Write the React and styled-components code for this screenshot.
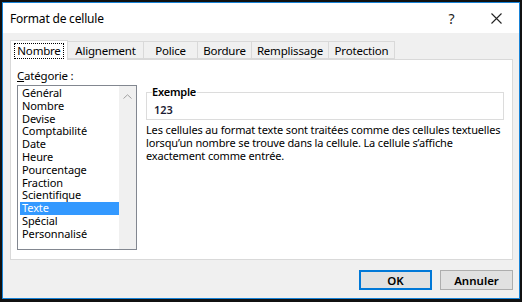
import React from "react";
import styled, { createGlobalStyle } from "styled-components";

const GlobalStyle = createGlobalStyle`
  html, body {
    margin: 0;
    padding: 0;
    background: #111;
  }
  body {
    font-family: "Noto Sans", "Open Sans", sans-serif;
    color: #000;
  }
`;

const Frame = styled.div`
  width: 522px;
  height: 302px;
  box-sizing: border-box;
  border: 2px solid #111;
  border-bottom-width: 3px;
`;

const Window = styled.div`
  height: 100%;
  box-sizing: border-box;
  border: 1px solid #1883d7;
  display: flex;
  flex-direction: column;
  background: #f0f0f0;
`;

const TitleBar = styled.div`
  height: 30px;
  background: #fff;
  display: flex;
  align-items: center;
  padding-left: 7px;
  font-size: 12px;
`;

const Title = styled.div`
  flex: 1;
  letter-spacing: -0.2px;
`;

const TitleButton = styled.div`
  width: 45px;
  height: 30px;
  display: flex;
  align-items: center;
  justify-content: center;
  font-size: 14px;
  color: #222;
`;

const Body = styled.div`
  flex: 1;
  display: flex;
  flex-direction: column;
  padding: 7px 6px 7px 7px;
`;

const TabStrip = styled.div`
  display: flex;
  align-items: flex-end;
  height: 19px;
  position: relative;
  z-index: 1;
`;

const Tab = styled.div`
  width: ${(p) => p.$w}px;
  box-sizing: border-box;
  height: ${(p) => (p.$active ? 20 : 18)}px;
  margin-bottom: ${(p) => (p.$active ? -1 : 0)}px;
  border: 1px solid #d9d9d9;
  border-bottom: ${(p) => (p.$active ? "none" : "1px solid #d9d9d9")};
  border-left-width: ${(p) => (p.$first || p.$active ? 1 : 0)}px;
  background: ${(p) => (p.$active ? "#fff" : "#f0f0f0")};
  display: flex;
  align-items: center;
  justify-content: center;
  font-size: 11.5px;
  letter-spacing: -0.2px;
`;

const FocusText = styled.span`
  outline: 1px dotted #000;
  outline-offset: 0;
  padding: 0 2px;
  line-height: 14px;
`;

const Panel = styled.div`
  height: 201px;
  box-sizing: border-box;
  background: #fff;
  border: 1px solid #d9d9d9;
  padding: 9px 8px 0 6px;
  display: flex;
  gap: 9px;
`;

const LeftColumn = styled.div`
  display: flex;
  flex-direction: column;
`;

const Label = styled.div`
  font-size: 11.5px;
  line-height: 14px;
  margin-bottom: 2px;
  letter-spacing: -0.2px;
`;

const ListBox = styled.div`
  width: 120px;
  height: 165px;
  box-sizing: border-box;
  border: 1px solid #828790;
  display: flex;
`;

const Items = styled.div`
  flex: 1;
  padding: 1px 0 0 2px;
`;

const Item = styled.div`
  height: 12.8px;
  line-height: 12.8px;
  font-size: 11px;
  padding-left: 2px;
  background: ${(p) => (p.$selected ? "#3399ff" : "transparent")};
  color: ${(p) => (p.$selected ? "#fff" : "#000")};
  letter-spacing: -0.1px;
`;

const ScrollBar = styled.div`
  width: 17px;
  background: #f0f0f0;
  display: flex;
  justify-content: center;
  padding-top: 8px;
  box-sizing: border-box;
`;

const RightColumn = styled.div`
  flex: 1;
  padding-top: 17px;
  display: flex;
  flex-direction: column;
`;

const Group = styled.fieldset`
  margin: 0;
  padding: 5px 7px 3px 7px;
  border: 1px solid #dcdcdc;
  min-width: 0;
`;

const Legend = styled.legend`
  font-size: 11px;
  font-weight: 600;
  padding: 0 1px 0 0;
  margin-left: -2px;
  line-height: 12px;
  letter-spacing: -0.2px;
`;

const Sample = styled.div`
  font-size: 11px;
  line-height: 13px;
  font-weight: 600;
  color: #1b1b33;
`;

const Description = styled.p`
  margin: 3px 0 0;
  font-size: 11px;
  line-height: 13px;
  letter-spacing: -0.15px;
  white-space: nowrap;
`;

const ButtonRow = styled.div`
  margin-top: 10px;
  display: flex;
  justify-content: flex-end;
  gap: 8px;
`;

const Button = styled.button`
  width: 73px;
  height: 20px;
  box-sizing: border-box;
  background: #e1e1e1;
  border: ${(p) => (p.$default ? "2px solid #0078d7" : "1px solid #adadad")};
  font-family: inherit;
  font-size: 11.5px;
  font-weight: 600;
  color: #000;
  padding: 0;
`;

const tabs = [
  { label: "Nombre", w: 58 },
  { label: "Alignement", w: 76 },
  { label: "Police", w: 54 },
  { label: "Bordure", w: 54 },
  { label: "Remplissage", w: 77 },
  { label: "Protection", w: 66 },
];

const categories = [
  "Général",
  "Nombre",
  "Devise",
  "Comptabilité",
  "Date",
  "Heure",
  "Pourcentage",
  "Fraction",
  "Scientifique",
  "Texte",
  "Spécial",
  "Personnalisé",
];

const Chevron = () => (
  <svg width="9" height="5" viewBox="0 0 9 5">
    <path d="M0.5 4.5 L4.5 0.8 L8.5 4.5" fill="none" stroke="#a0a0a0" strokeWidth="1" />
  </svg>
);

const CloseIcon = () => (
  <svg width="11" height="11" viewBox="0 0 11 11">
    <path d="M0.5 0.5 L10.5 10.5 M10.5 0.5 L0.5 10.5" stroke="#222" strokeWidth="1.1" />
  </svg>
);

export default function App() {
  return (
    <>
      <GlobalStyle />
      <Frame>
        <Window>
          <TitleBar>
            <Title>Format de cellule</Title>
            <TitleButton>?</TitleButton>
            <TitleButton>
              <CloseIcon />
            </TitleButton>
          </TitleBar>
          <Body>
            <TabStrip>
              {tabs.map((t, i) => (
                <Tab key={t.label} $w={t.w} $active={i === 0} $first={i === 0}>
                  {i === 0 ? <FocusText>{t.label}</FocusText> : t.label}
                </Tab>
              ))}
            </TabStrip>
            <Panel>
              <LeftColumn>
                <Label>
                  <u>C</u>atégorie :
                </Label>
                <ListBox>
                  <Items>
                    {categories.map((c) => (
                      <Item key={c} $selected={c === "Texte"}>
                        {c}
                      </Item>
                    ))}
                  </Items>
                  <ScrollBar>
                    <Chevron />
                  </ScrollBar>
                </ListBox>
              </LeftColumn>
              <RightColumn>
                <Group>
                  <Legend>Exemple</Legend>
                  <Sample>123</Sample>
                </Group>
                <Description>
                  Les cellules au format texte sont traitées comme des cellules textuelles
                  <br />
                  lorsqu’un nombre se trouve dans la cellule. La cellule s’affiche
                  <br />
                  exactement comme entrée.
                </Description>
              </RightColumn>
            </Panel>
            <ButtonRow>
              <Button $default>OK</Button>
              <Button>Annuler</Button>
            </ButtonRow>
          </Body>
        </Window>
      </Frame>
    </>
  );
}
